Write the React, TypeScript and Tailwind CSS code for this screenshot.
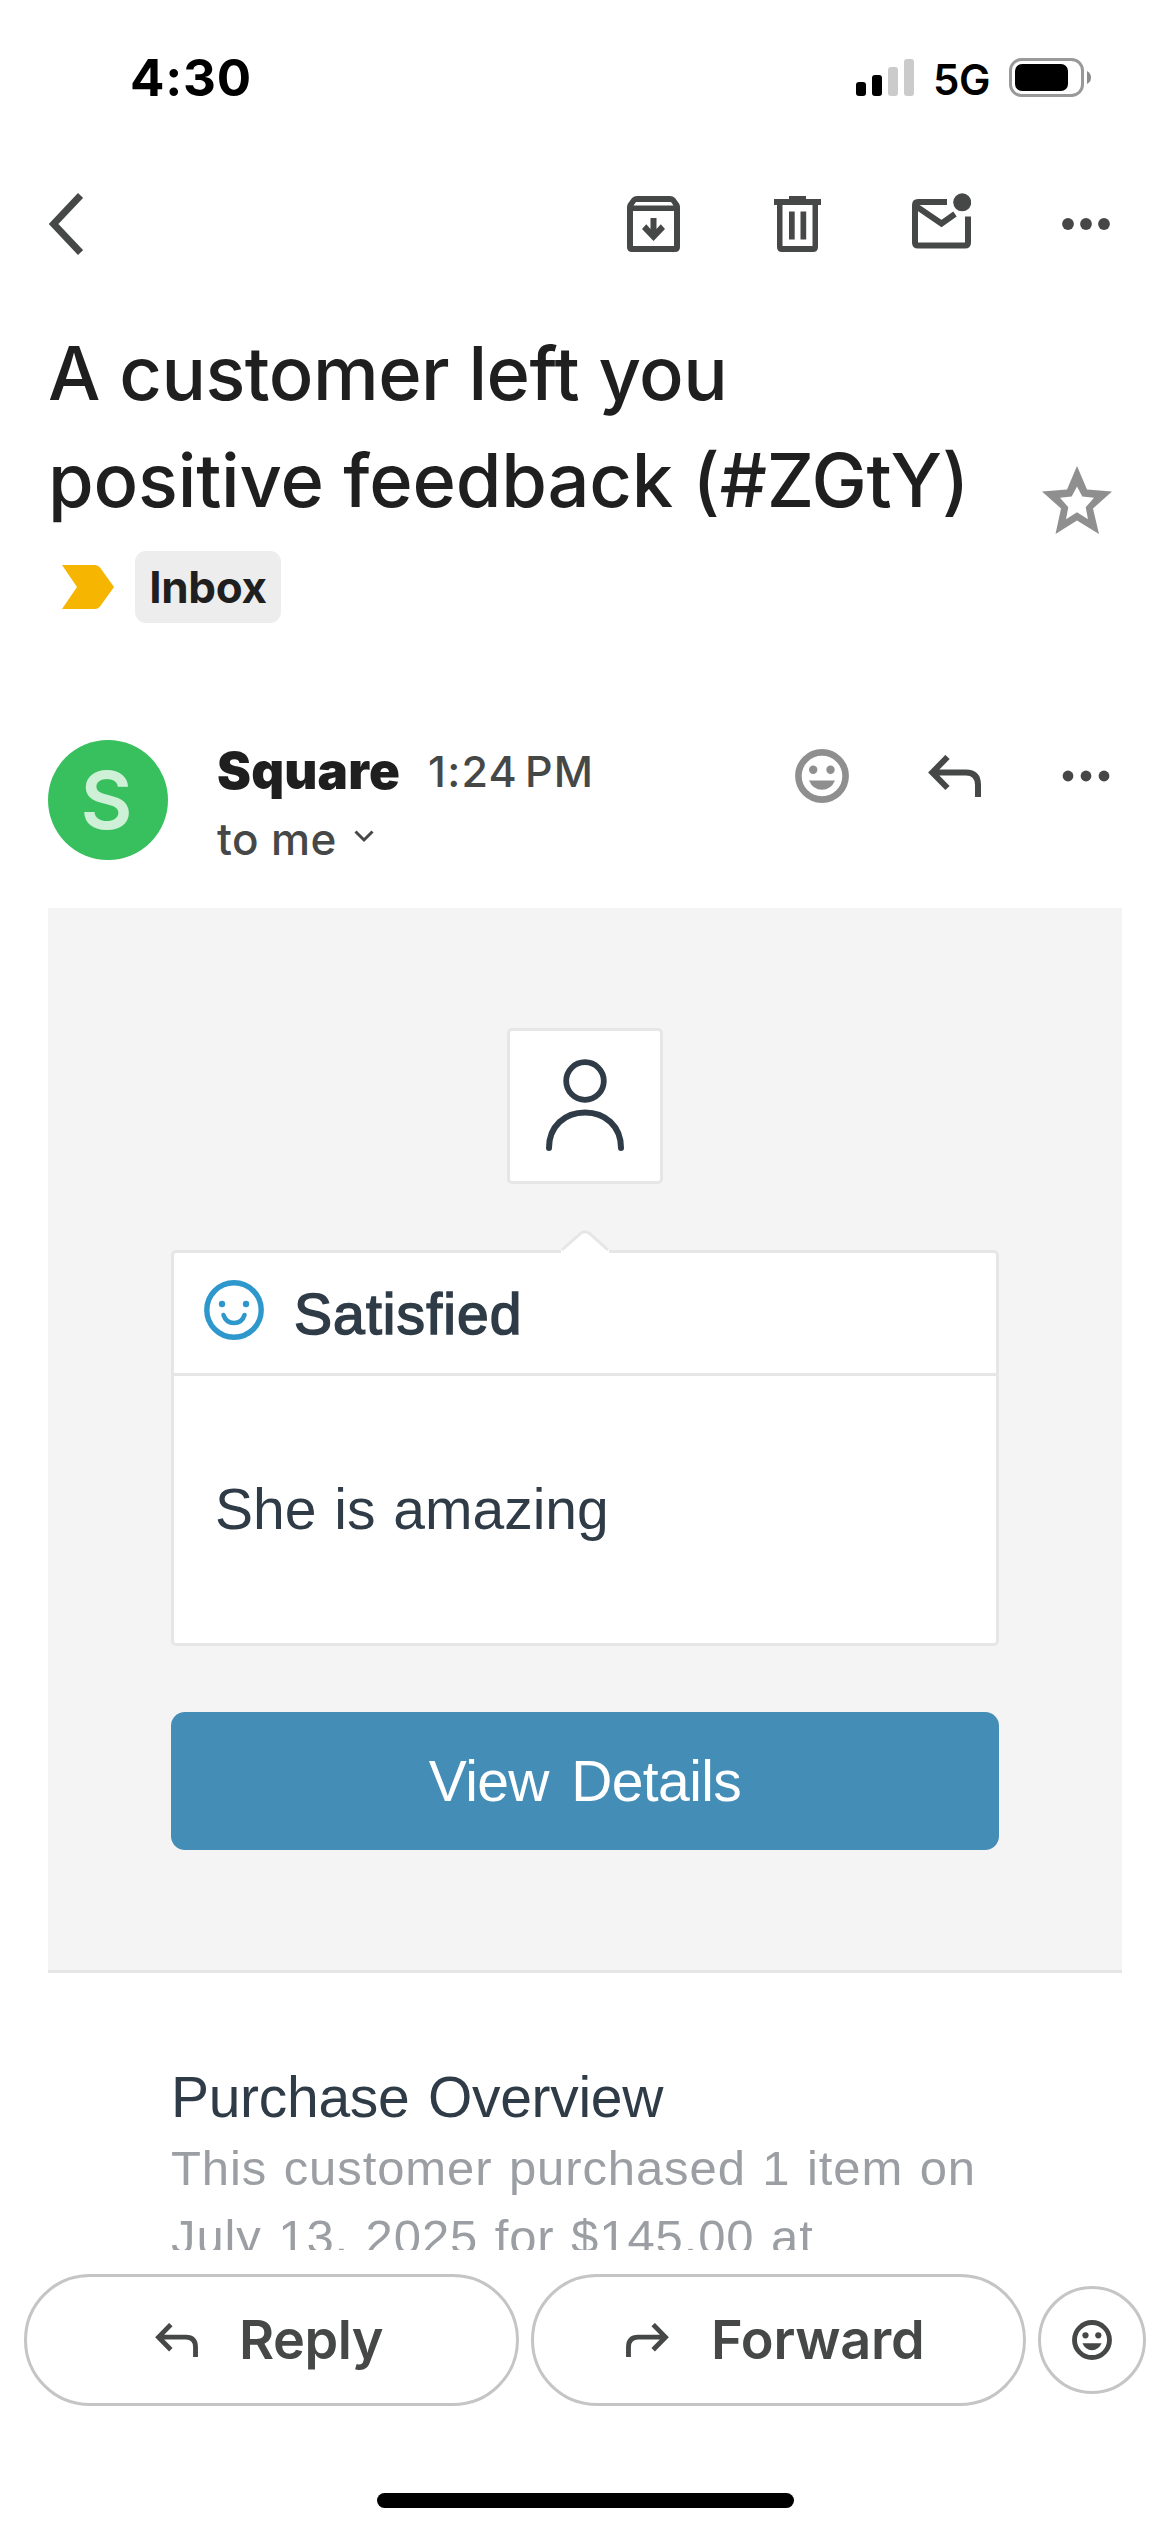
import type { ReactNode } from 'react'

type IconProps = {
  className?: string
}

const ChevronLeftIcon = () => (
  <svg width="34" height="62" viewBox="0 0 34 62" fill="none">
    <path d="M31.500 2.500L4.500 31L31.500 59.500" stroke="#464847" strokeWidth="7" />
  </svg>
)

const ArchiveIcon = () => (
  <svg width="53" height="56" viewBox="0 0 53 56" fill="#464847">
    <path
      fillRule="evenodd"
      d="M10 0H43Q46 0 48 2L52 7.500Q53 9 53 11V51Q53 56 48 56H5Q0 56 0 51V11Q0 9 1 7.500L5 2Q7 0 10 0ZM9 6L6.500 9.500H46.500L44 6ZM6 15V50H47V15ZM23.500 22H29.500V33L33.800 28.200L38 33L26.500 45L15 33L19.300 28.200L23.500 33Z"
    />
  </svg>
)

const TrashIcon = () => (
  <svg width="47" height="56" viewBox="0 0 47 56" fill="#464847">
    <path
      fillRule="evenodd"
      d="M15 0H32V3H47V9H44V51Q44 56 39 56H8Q3 56 3 51V9H0V3H15ZM8.500 9V50H38.500V9ZM15 15.500H20.700V43.500H15ZM26.500 15.500H32.200V43.500H26.500Z"
    />
  </svg>
)

const UnreadMailIcon = () => (
  <svg width="59" height="62" viewBox="0 0 59 62" fill="none">
    <path
      d="M35 9H6Q3 9 3 12V49.500Q3 52.500 6 52.500H53Q56 52.500 56 49.500V23.500M3 12.500L29.500 30.500L43 21"
      stroke="#464847"
      strokeWidth="6"
    />
    <circle cx="50.200" cy="9.300" r="9" fill="#464847" />
  </svg>
)

const MoreIcon = ({ r }: { r: number }) => (
  <svg width="48" height="14" viewBox="0 0 48 14" fill="#464847">
    <circle cx="6" cy="7" r={r} />
    <circle cx="24" cy="7" r={r} />
    <circle cx="42" cy="7" r={r} />
  </svg>
)

const ReplyIcon = ({ className }: IconProps) => (
  <svg className={className} viewBox="0 0 53 42" fill="none">
    <path
      d="M19.500 2L4.300 17.500L19.500 33M4.300 17.500H38Q50 17.500 50 30V42"
      stroke="#464847"
      strokeWidth="6"
    />
  </svg>
)

const EmojiIcon = ({ className }: IconProps) => (
  <svg className={className} viewBox="0 0 54 54" fill="currentColor">
    <circle
      cx="27"
      cy="27"
      r="23.600"
      fill="none"
      stroke="currentColor"
      strokeWidth="6.600"
    />
    <circle cx="18.200" cy="20.700" r="4.200" />
    <circle cx="35.500" cy="20.700" r="4.200" />
    <path d="M14 31.500H40Q36 40.800 27 40.800T14 31.500Z" />
  </svg>
)

const StarIcon = () => (
  <svg width="70" height="68" viewBox="0 0 70 68" fill="#8f8f8f">
    <path
      fillRule="evenodd"
      d="M35 0L45 23.500L70 25.500L51 42.500L57 68L35 54.500L13.500 68L19 42.500L0 25.500L25 23.500ZM35 20.500L29.700 30.500L18 31.700L26.300 41.300L24 53.300L35 46.300L46 53.300L43.700 41.300L52 31.700L40.300 30.500Z"
    />
  </svg>
)

const ImportanceIcon = () => (
  <svg width="52" height="44" viewBox="0 0 52 44" fill="#f6b500">
    <path d="M0 0H33Q36 0 38 2.500L52 22L38 41.500Q36 44 33 44H0L15 22Z" />
  </svg>
)

const StatusBar = () => (
  <div className="flex h-[156px] items-center pr-[79px] pl-[130px]">
    <span className="text-[51px] font-bold tracking-[0.8px] text-black">
      4:30
    </span>
    <svg
      className="ml-auto"
      width="58"
      height="38"
      viewBox="0 0 58 38"
      fill="#000"
    >
      <rect x="0" y="23" width="10" height="14" rx="3" />
      <rect x="16" y="16" width="10" height="21" rx="3" />
      <rect x="32" y="8" width="10" height="29" rx="3" fill="#cbcbcb" />
      <rect x="48" y="0" width="10" height="37" rx="3" fill="#cbcbcb" />
    </svg>
    <span className="ml-[19px] w-[56px] pt-[2px] text-[42px] font-semibold tracking-[-0.5px] text-black">
      5G
    </span>
    <svg
      className="ml-[20px]"
      width="82"
      height="40"
      viewBox="0 0 82 40"
      fill="none"
    >
      <rect
        x="1.500"
        y="1.500"
        width="72"
        height="36"
        rx="11"
        stroke="#999"
        strokeWidth="3"
      />
      <rect x="6" y="6" width="53" height="27" rx="7" fill="#000" />
      <path d="M78 13Q82 15 82 19.500T78 26Z" fill="#8c8c8c" />
    </svg>
  </div>
)

const Toolbar = () => (
  <div className="flex h-[136px] items-center pr-[60px] pl-[49px]">
    <ChevronLeftIcon />
    <div className="ml-auto flex items-center">
      <ArchiveIcon />
      <div className="ml-[94px]">
        <TrashIcon />
      </div>
      <div className="ml-[91px]">
        <UnreadMailIcon />
      </div>
      <div className="ml-[91px]">
        <MoreIcon r={5.9} />
      </div>
    </div>
  </div>
)

const Subject = () => (
  <div className="mt-7 flex items-end justify-between pr-[58px] pl-[48px]">
    <h1 className="text-[74px] leading-[107px] font-medium whitespace-nowrap text-[#1f1f1f]">
      <span className="block tracking-[-0.5px]">A customer left you</span>
      <span className="block tracking-[-0.2px]">
        positive feedback (#ZGtY)
      </span>
    </h1>
    <StarIcon />
  </div>
)

const Labels = () => (
  <div className="mt-[17px] flex items-center pl-[62px]">
    <ImportanceIcon />
    <span className="ml-[21px] flex h-[72px] w-[146px] items-center justify-center rounded-[11px] bg-[#ededed] text-[44px] font-bold tracking-[-0.3px] text-[#1f1f1f]">
      Inbox
    </span>
  </div>
)

const Sender = () => (
  <div className="mt-[117px] flex h-[120px] items-start pr-[60px] pl-[48px]">
    <div className="flex size-[120px] items-center justify-center rounded-full bg-[#38bf5e] pr-[3px] text-[80px] font-semibold text-[#cdf0d6]">
      S
    </div>
    <div className="ml-[49px] whitespace-nowrap">
      <div className="flex h-[62px] items-center">
        <span className="w-[186px] text-[51px] font-black tracking-[0.2px] text-[#1f1f1f]">
          Square
        </span>
        <span className="ml-[25px] text-[43px] font-medium tracking-[1.3px] text-[#464847] [word-spacing:-6px]">
          1:24 PM
        </span>
      </div>
      <div className="mt-1.5 flex h-[62px] items-center">
        <span className="text-[44px] font-medium tracking-[0.4px] text-[#464847]">
          to me
        </span>
        <svg
          className="mb-[6px] ml-[17px]"
          width="20"
          height="13"
          viewBox="0 0 20 13"
          fill="none"
        >
          <path d="M1.500 1.500L10 10L18.500 1.500" stroke="#464847" strokeWidth="3" />
        </svg>
      </div>
    </div>
    <div className="ml-auto flex h-[72px] items-center">
      <EmojiIcon className="h-[54px] w-[54px] text-[#8f8f8f]" />
      <ReplyIcon className="ml-[79px] h-[42px] w-[53px]" />
      <div className="ml-[81px]">
        <MoreIcon r={5.4} />
      </div>
    </div>
  </div>
)

const FeedbackCard = () => (
  <div className="relative mt-[66px] h-[396px] rounded-[5px] border-[3px] border-[#e6e6e6] bg-white">
    <svg
      className="absolute -top-[23px] left-[387px]"
      width="48"
      height="24"
      viewBox="0 0 48 24"
    >
      <path d="M0 24V20L19 3Q24 -1 29 3L48 20V24Z" fill="#fff" />
      <path
        d="M1 20L19.500 3.500Q24 0 28.500 3.500L47 20"
        fill="none"
        stroke="#e6e6e6"
        strokeWidth="3"
      />
    </svg>
    <div className="flex h-[123px] items-center border-b-[3px] border-[#e6e6e6] pl-[30px]">
      <svg
        className="mb-[6px]"
        width="60"
        height="60"
        viewBox="0 0 60 60"
        fill="none"
      >
        <circle cx="30" cy="30" r="27.200" stroke="#2e98cc" strokeWidth="5.400" />
        <circle cx="18" cy="24" r="3.200" fill="#2e98cc" />
        <circle cx="42" cy="24" r="3.200" fill="#2e98cc" />
        <path
          d="M19.500 35Q22 43 30 43T40.500 35"
          stroke="#2e98cc"
          strokeWidth="4.500"
          strokeLinecap="round"
        />
      </svg>
      <span className="ml-[30px] pt-[3px] text-[57px] tracking-[1.1px] [-webkit-text-stroke:1.6px_#2f3c47]">
        Satisfied
      </span>
    </div>
    <div className="flex h-[267px] items-center pl-[41px] text-[57px] [word-spacing:2px]">
      She is amazing
    </div>
  </div>
)

const EmailBody = () => (
  <div className="px-[48px] font-['Liberation_Sans',Arial,sans-serif] text-[#2f3c47]">
    <div className="mt-[48px] border-b-[3px] border-[#e6e6e6] bg-[#f4f4f4] px-[123px] py-[120px]">
      <div className="mx-auto size-[156px] rounded-[5px] border-[3px] border-[#e6e6e6] bg-white">
        <svg width="150" height="150" viewBox="0 0 150 150" fill="none">
          <circle cx="75" cy="50" r="18.800" stroke="#2f3c47" strokeWidth="5.800" />
          <path
            d="M39 117C39 95 55 81.500 75 81.500S111 95 111 117"
            stroke="#2f3c47"
            strokeWidth="6"
            strokeLinecap="round"
          />
        </svg>
      </div>
      <FeedbackCard />
      <div className="mt-[66px] flex h-[138px] items-center justify-center rounded-[14px] bg-[#438db7] pt-[2px] text-[57px] tracking-[-0.6px] text-white [word-spacing:7px]">
        View Details
      </div>
    </div>
    <div className="mt-[89px] px-[123px] whitespace-nowrap">
      <h2 className="text-[57px] leading-[71px] tracking-[-0.3px] [word-spacing:3px]">
        Purchase Overview
      </h2>
      <p className="mt-px text-[49px] leading-[69px] tracking-[0.9px] text-[#9b9fa4] [word-spacing:2px]">
        This customer purchased 1 item on
        <br />
        July 13, 2025 for $145.00 at
      </p>
    </div>
  </div>
)

const PillButton = ({
  children,
  className
}: {
  children: ReactNode
  className: string
}) => (
  <div
    className={`flex h-[132px] w-[495px] items-center rounded-full border-[3px] border-[#c5c5c5] text-[54px] font-semibold text-[#464847] ${className}`}
  >
    {children}
  </div>
)

const BottomBar = () => (
  <div className="h-[282px] bg-white pt-6">
    <div className="flex items-center gap-3 px-6">
      <PillButton className="pl-[128px]">
        <ReplyIcon className="h-[34px] w-[43px]" />
        <span className="mb-[2px] ml-[41px] tracking-[-0.5px]">Reply</span>
      </PillButton>
      <PillButton className="pl-[92px]">
        <ReplyIcon className="h-[34px] w-[43px] -scale-x-100" />
        <span className="mb-[2px] ml-[42px] tracking-[-0.2px]">Forward</span>
      </PillButton>
      <div className="flex size-[108px] items-center justify-center rounded-full border-[3px] border-[#c5c5c5]">
        <EmojiIcon className="size-10 text-[#464847]" />
      </div>
    </div>
    <div className="mx-auto mt-[87px] h-[15px] w-[417px] rounded-full bg-black" />
  </div>
)

export default function App() {
  return (
    <div className="h-[2532px] w-[1170px] overflow-hidden bg-white font-['Inter',sans-serif]">
      <main className="h-[2250px] overflow-hidden">
        <StatusBar />
        <Toolbar />
        <Subject />
        <Labels />
        <Sender />
        <EmailBody />
      </main>
      <BottomBar />
    </div>
  )
}
